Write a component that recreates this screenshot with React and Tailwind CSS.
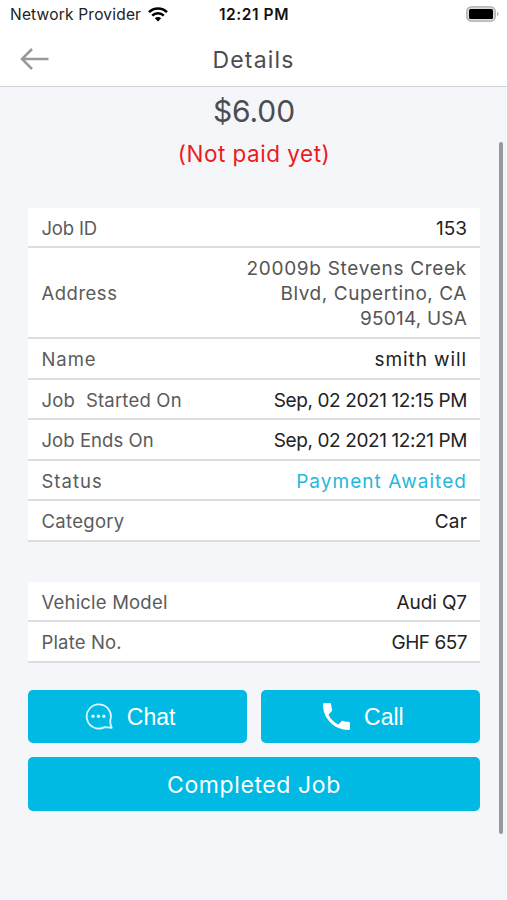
const jobRows = [
  { label: "Job ID", value: ["153"], labelClass: "tracking-[-0.2px]", valueClass: "text-[#222]", rowClass: "h-[40px]" },
  {
    label: "Address",
    value: ["20009b Stevens Creek", "Blvd, Cupertino, CA", "95014, USA"],
    labelClass: "tracking-[0.5px]",
    valueClass: "tracking-[0.7px] text-[#555] [&>span:nth-child(2)]:tracking-[0.55px] [&>span:nth-child(3)]:tracking-[0.2px]",
    rowClass: "h-[91px] pb-[1px]",
  },
  { label: "Name", value: ["smith will"], labelClass: "tracking-[0.9px]", valueClass: "tracking-[0.9px] text-[#222]", rowClass: "h-[40.5px]" },
  { label: "Job  Started On", value: ["Sep, 02 2021 12:15 PM"], labelClass: "tracking-[0.2px]", valueClass: "tracking-[-0.4px] text-[#222]", rowClass: "h-[40.5px]" },
  { label: "Job Ends On", value: ["Sep, 02 2021 12:21 PM"], labelClass: "tracking-[0.05px]", valueClass: "tracking-[-0.4px] text-[#222]", rowClass: "h-[40.5px]" },
  { label: "Status", value: ["Payment Awaited"], labelClass: "tracking-[1px]", valueClass: "tracking-[1.05px] text-[#24b8dc]", rowClass: "h-[40.5px]" },
  { label: "Category", value: ["Car"], labelClass: "tracking-[0.3px]", valueClass: "tracking-[0.2px] text-[#222]", rowClass: "h-[40.5px]" },
];

const vehicleRows = [
  { label: "Vehicle Model", value: ["Audi Q7"], labelClass: "tracking-[0.2px]", valueClass: "tracking-[-0.1px] text-[#222]", rowClass: "h-[40.5px]" },
  { label: "Plate No.", value: ["GHF 657"], labelClass: "tracking-[0.15px]", valueClass: "tracking-[-0.5px] text-[#222]", rowClass: "h-[40.5px]" },
];

function Table({ rows }) {
  return (
    <dl className="bg-white leading-[25px]">
      {rows.map((row) => (
        <div key={row.label} className={`flex items-center justify-between border-b-2 border-[#dcdddf] pt-[3px] pr-[13px] pl-[13.5px] ${row.rowClass}`}>
          <dt className={`text-[18.5px] whitespace-pre text-[#5b5b5b] ${row.labelClass}`}>{row.label}</dt>
          <dd className={`flex flex-col items-end text-[19px] whitespace-pre ${row.valueClass}`}>
            {row.value.map((line) => (
              <span key={line}>{line}</span>
            ))}
          </dd>
        </div>
      ))}
    </dl>
  );
}

function WifiIcon() {
  return (
    <svg className="-mt-px h-[15px] w-[20px]" viewBox="0 0 20 15" fill="none" stroke="#000" strokeWidth="2.5">
      <path d="M1 5.2a12.7 12.7 0 0 1 18 0" />
      <path d="M4.2 8.6a8.2 8.2 0 0 1 11.6 0" />
      <path d="M10 14.5 6.8 11.2a4.6 4.6 0 0 1 6.4 0Z" fill="#000" stroke="none" />
    </svg>
  );
}

export default function App() {
  return (
    <div className="relative flex h-[900px] w-[507px] flex-col overflow-hidden bg-[#f4f6fa] font-['Inter',sans-serif]">
      <header className="h-[87px] shrink-0 border-b-[1.5px] border-[#d2d3d5] bg-white">
        <div className="grid h-[30px] grid-cols-[1fr_auto_1fr] items-center pr-[8px] pl-[10px] text-[15.5px] leading-[30px]">
          <div className="flex items-center gap-[7px] text-[#222]">
            <span className="tracking-[0.2px]">Network Provider</span>
            <WifiIcon />
          </div>
          <span className="-ml-[1px] font-semibold tracking-[0.55px] text-[#111]">12:21 PM</span>
          <svg className="-mt-[2px] h-[18px] w-[34px] justify-self-end" viewBox="0 0 34 18">
            <rect x="1.8" y="1.8" width="28.4" height="14.4" rx="4.5" fill="#ddd" stroke="#aaa" strokeWidth="1.3" />
            <rect x="4" y="4" width="24" height="10" rx="1.5" fill="#000" />
            <path d="M32 7v4q1.5-.5 1.5-2T32 7Z" fill="#aaa" />
          </svg>
        </div>
        <div className="grid h-[57px] grid-cols-[1fr_auto_1fr] items-center px-[20px]">
          <svg className="h-[22px] w-[30px]" viewBox="0 0 30 22" fill="none" stroke="#999" strokeWidth="2.5">
            <path d="M2 11h26.5M12 1 2 11l10 10" />
          </svg>
          <h1 className="pt-[2px] text-[23px] leading-[30px] tracking-[1.15px] text-[#4c4d50]">Details</h1>
        </div>
      </header>

      <main className="flex flex-col pr-[27px] pl-[28px]">
        <div className="h-[121px] text-center">
          <p className="pt-[4px] text-[30px] leading-[40px] tracking-[-0.1px] text-[#4c4d50]">$6.00</p>
          <p className="pt-[7px] text-[22.5px] leading-[32px] tracking-[0.5px] text-[#ee1b1b]">(Not paid yet)</p>
        </div>
        <Table rows={jobRows} />
        <div className="h-[40px]" />
        <Table rows={vehicleRows} />
        <div className="mt-[27px] grid grid-cols-2 gap-x-[13.5px] gap-y-[14px] text-[23px] text-white">
          <button className="flex h-[53.5px] items-center justify-center gap-[14px] rounded-[5px] bg-[#00bae3] pr-[15px] font-['Liberation_Sans',sans-serif]">
            <svg className="h-[27px] w-[28px]" viewBox="0 0 28 27" fill="none" stroke="#d9fbff" strokeWidth="1.8" strokeLinejoin="round">
              <path d="M25.3 17.2A12.1 12.1 0 1 0 19.6 24.1Q22.5 24.2 26.7 24.8Q25.1 22.4 25.3 17.2Z" />
              <g fill="#d9fbff" stroke="none">
                <circle cx="8" cy="13.2" r="1.7" />
                <circle cx="13.4" cy="13.2" r="1.7" />
                <circle cx="18.8" cy="13.2" r="1.7" />
              </g>
            </svg>
            <span className="pt-px">Chat</span>
          </button>
          <button className="flex h-[53.5px] items-center justify-center gap-[14px] rounded-[5px] bg-[#00bae3] pr-[14px] font-['Liberation_Sans',sans-serif]">
            <svg className="mt-px h-[27px] w-[27px]" viewBox="3 3 18 18" fill="#fff">
              <path d="M20 15.5c-1.25 0-2.45-.2-3.57-.57-.35-.11-.74-.03-1.02.24l-2.2 2.2a15.05 15.05 0 0 1-6.59-6.58l2.2-2.21c.28-.27.36-.66.25-1.01A11.36 11.36 0 0 1 8.5 4c0-.55-.45-1-1-1H4c-.55 0-1 .45-1 1 0 9.39 7.61 17 17 17 .55 0 1-.45 1-1v-3.5c0-.55-.45-1-1-1Z" />
            </svg>
            <span className="pt-px">Call</span>
          </button>
          <button className="col-span-2 h-[53.5px] rounded-[5px] bg-[#00bae3] pt-[2px] tracking-[0.6px]">Completed Job</button>
        </div>
      </main>
      <div className="absolute top-[142px] right-[4px] h-[692px] w-[4px] rounded-full bg-[#98999c]" />
    </div>
  );
}
